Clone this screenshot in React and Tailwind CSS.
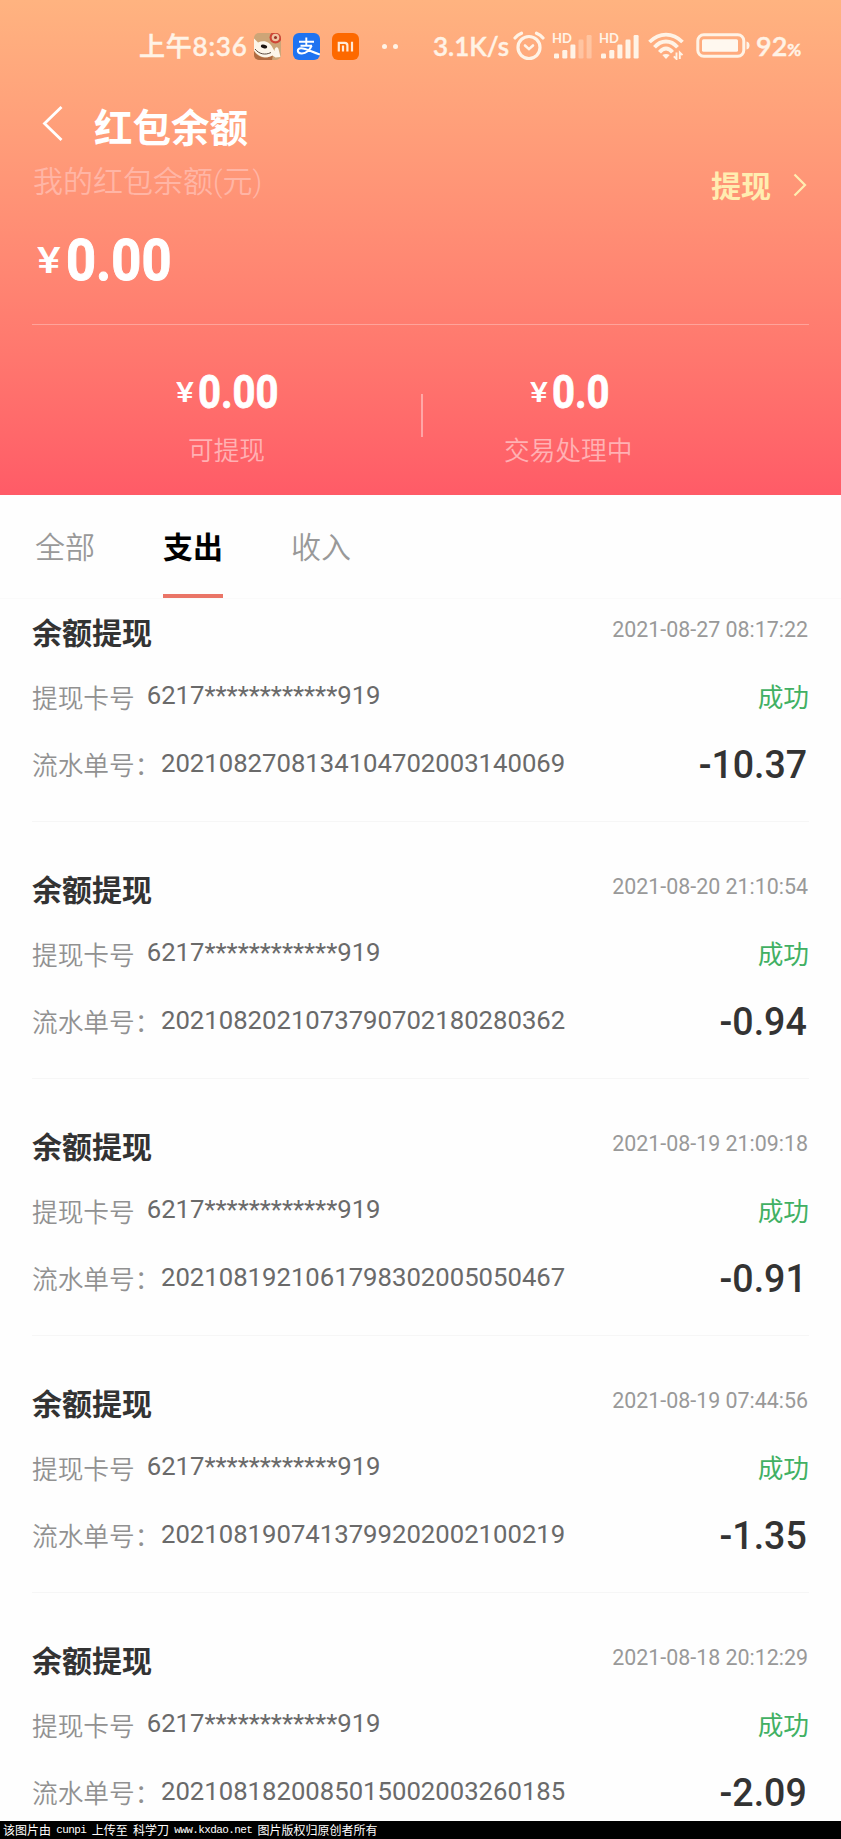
const CJK = "font-['Roboto','Noto_Sans_CJK_SC',sans-serif]"

const RECORDS = [
  { time: '2021-08-27 08:17:22', serial: '2021082708134104702003140069', amount: '-10.37' },
  { time: '2021-08-20 21:10:54', serial: '2021082021073790702180280362', amount: '-0.94' },
  { time: '2021-08-19 21:09:18', serial: '2021081921061798302005050467', amount: '-0.91' },
  { time: '2021-08-19 07:44:56', serial: '2021081907413799202002100219', amount: '-1.35' },
  { time: '2021-08-18 20:12:29', serial: '2021081820085015002003260185', amount: '-2.09' },
]

function JdIcon() {
  return (
    <svg width="27" height="27" viewBox="0 0 27 27" className="shrink-0">
      <defs>
        <clipPath id="jd"><rect width="27" height="27" rx="5" /></clipPath>
      </defs>
      <g clipPath="url(#jd)">
        <rect width="27" height="27" fill="#cda577" />
        <circle cx="21.500" cy="4.500" r="6" fill="#cf4636" />
        <circle cx="21.500" cy="4.500" r="3.800" fill="#efc4a2" />
        <circle cx="21.500" cy="4.500" r="1.500" fill="#9a3226" />
        <path d="M0 18c3 5 9 8 15 6l4-2-1 5H0z" fill="#b06a40" />
        <path d="M0 5.500l4 4c6-2.500 12-1 15 6l1.500 2.500c0-4 3-5 4-2l2 8-5 .5-3-2c-5 3-13 3-18.500-5z" fill="#fdf6ea" />
        <ellipse cx="10" cy="13.500" rx="3.200" ry="1.900" fill="#1c1512" transform="rotate(12 10 13.500)" />
        <path d="M1 16c4 5 10 6.500 16 3.500" fill="none" stroke="#4a382b" strokeWidth="0.900" />
      </g>
    </svg>
  )
}

function AlipayIcon() {
  return (
    <svg width="27" height="27" viewBox="0 0 27 27" className="shrink-0">
      <defs>
        <clipPath id="ali"><rect width="27" height="27" rx="6" /></clipPath>
      </defs>
      <g clipPath="url(#ali)" fill="none" stroke="#fff">
        <rect width="27" height="27" fill="#1f73f1" stroke="none" />
        <path d="M6 8.700h15M13.300 4.500v8.200M7.500 12.700h11.500" strokeWidth="1.900" />
        <path d="M18.600 12.700C17 17 13 20.700 8.600 20.500c-5-.2-4.800-5.200-.6-5.200 5 0 10 3.300 19 6.200" strokeWidth="2.100" />
      </g>
    </svg>
  )
}

function MiIcon() {
  return (
    <svg width="27" height="27" viewBox="0 0 27 27" className="shrink-0">
      <rect width="27" height="27" rx="6" fill="#fd6900" />
      <path d="M6.800 18.500V9.800h6q2.600 0 2.600 2.600v6.100M11 12.500v6M20 8.700v9.800" fill="none" stroke="#ffe9d6" strokeWidth="2.200" />
    </svg>
  )
}

function AlarmIcon() {
  return (
    <svg width="32" height="30" viewBox="0 0 32 30" fill="none" stroke="#fff3e6" strokeWidth="3.200" className="shrink-0">
      <circle cx="16" cy="16.500" r="11" />
      <path d="M2 7Q4.500 3.800 8.500 2.200M30 7Q27.500 3.800 23.500 2.200" strokeLinecap="round" />
      <path d="M12 14.500l4 3.600 4-3.600" strokeWidth="2.600" strokeLinecap="round" />
    </svg>
  )
}

function SignalIcon({ level }) {
  const bars = [
    [2, 20.500, 5],
    [10.300, 17, 8.500],
    [18.400, 11.500, 14],
    [26.500, 6.500, 19],
    [34.600, 2, 23.500],
  ]
  return (
    <span className="relative block h-[27px] w-[40px] shrink-0">
      <span className="absolute -top-[2px] left-0 font-['Lato'] text-[13px] leading-[14px] font-bold text-[#fff3e6]">HD</span>
      <svg width="40" height="27" viewBox="0 0 40 27">
        {bars.map(([x, y, h], i) => (
          <rect key={x} x={x} y={y} width="5" height={h} rx="1.200" fill="#fff3e6" opacity={i < level ? 1 : 0.35} />
        ))}
      </svg>
    </span>
  )
}

function WifiIcon() {
  return (
    <svg width="36" height="28" viewBox="0 0 36 28" fill="none" stroke="#fff3e6" strokeWidth="3.800" className="shrink-0">
      <path d="M1.500 10Q9 2.600 18 2.600T34.500 10" />
      <path d="M6.500 15.300Q11.500 9.500 18 9.500T29.500 15.300" />
      <path d="M11.500 20.300Q14.500 16.500 18 16.500T24.500 20.300" />
      <path d="M14.300 23q3.700-2.200 7.400 0L18 27z" fill="#fff3e6" stroke="none" />
      <path d="M28.500 20.500v6.500l-2.700-2.700M31.800 27v-6.500l2.700 2.700" strokeWidth="1.900" />
    </svg>
  )
}

function BatteryIcon() {
  return (
    <svg width="54" height="26" viewBox="0 0 54 26" className="shrink-0">
      <rect x="1.800" y="1.800" width="46" height="21.500" rx="6" fill="none" stroke="#fff3e6" strokeWidth="3" />
      <rect x="6" y="6.300" width="36" height="12.500" rx="1.500" fill="#fff8ef" />
      <path d="M50.500 8.500q3 .5 3 4t-3 4z" fill="#fff3e6" />
    </svg>
  )
}

function StatusBar() {
  return (
    <div className="flex h-[92px] items-center pl-[139px] font-['Lato','Noto_Sans_CJK_SC',sans-serif] text-[#fff3e6]">
      <span className="w-[115px] text-[26px] font-medium tracking-[0.8px] whitespace-nowrap [-webkit-text-stroke:0.5px]">上午8:36</span>
      <div className="flex gap-[12px]">
        <JdIcon />
        <AlipayIcon />
        <MiIcon />
      </div>
      <div className="ml-[23px] flex gap-[6px]">
        <i className="size-[5px] rounded-full bg-[#fff3e6]" />
        <i className="size-[5px] rounded-full bg-[#fff3e6]" />
      </div>
      <span className="ml-[35px] w-[80px] text-[26px] font-semibold whitespace-nowrap [-webkit-text-stroke:0.4px]">3.1K/s</span>
      <AlarmIcon />
      <div className="ml-[7px] flex gap-[7px]">
        <SignalIcon level={3} />
        <SignalIcon level={5} />
      </div>
      <div className="ml-[9px]"><WifiIcon /></div>
      <div className="ml-[12px]"><BatteryIcon /></div>
      <span className="ml-[6px] text-[27px] font-semibold whitespace-nowrap [-webkit-text-stroke:0.4px]">
        92<span className="text-[17px] font-bold">%</span>
      </span>
    </div>
  )
}

function SmallAmount({ value }) {
  return (
    <div className="flex h-[62px] items-center">
      <span className="w-[22px] origin-left scale-x-[1.2] pt-px text-[28px] font-medium">¥</span>
      <span className="origin-left scale-x-[0.87] text-[46px] font-bold [-webkit-text-stroke:0.8px]">{value}</span>
    </div>
  )
}

function Header() {
  return (
    <header className="h-[495px] shrink-0 bg-linear-to-b from-[#ffb380] to-[#ff5b67] text-white">
      <StatusBar />
      <div className="flex h-[68px] items-center pl-[41px]">
        <svg width="22" height="36" viewBox="0 0 22 36" fill="none" stroke="#fff" strokeWidth="2.800" className="mb-[4px]">
          <path d="M20.500 1L3.500 17.500l17 16.500" />
        </svg>
        <h1 className="ml-[31px] pt-[5px] text-[38.500px] leading-[64px] font-bold">红包余额</h1>
      </div>
      <div className="flex h-[50px] items-start justify-between pr-[34px] pl-[33px]">
        <span className="text-[30px] leading-[43px] font-[350] text-[#ffb5a5]">我的红包余额(元)</span>
        <button className="flex items-center text-[30px] leading-[50px] font-bold text-[#ffedb0]">
          <span className="pt-[2px]">提现</span>
          <svg width="14" height="24" viewBox="0 0 14 24" fill="none" stroke="#ffedb0" strokeWidth="2.200" className="mb-[2px] ml-[22px]">
            <path d="M1.500 1.500L12 12 1.500 22.500" />
          </svg>
        </button>
      </div>
      <div className="flex h-[114px] items-center pb-[13px] pl-[37px]">
        <span className="w-[29px] origin-left scale-x-[1.2] text-[37px] leading-none font-medium">¥</span>
        <span className="origin-left scale-x-[0.92] text-[57px] leading-none font-bold [-webkit-text-stroke:1px]">0.00</span>
      </div>
      <div className="mx-[32px] h-px bg-white/30" />
      <div className="flex pt-[36px]">
        <div className="w-[421px] pl-[176px]">
          <SmallAmount value="0.00" />
          <div className="pl-[12px] text-[25.700px] leading-[56px] font-[350] text-white/50">可提现</div>
        </div>
        <div className="mt-[33px] h-[43px] w-[2px] bg-white/40" />
        <div className="pl-[107px]">
          <SmallAmount value="0.0" />
          <div className="-ml-[26px] text-[25.700px] leading-[56px] font-[350] text-white/50">交易处理中</div>
        </div>
      </div>
    </header>
  )
}

function Tabs() {
  return (
    <nav className="flex h-[104px] shrink-0 gap-[68px] border-b border-[#fafafa] pl-[35px] text-[30px] leading-[105px] font-[350] text-[#999]">
      <span>全部</span>
      <span className="relative font-bold text-black">
        支出
        <i className="absolute top-[99px] left-0 h-[4px] w-full bg-[#ea7567]" />
      </span>
      <span>收入</span>
    </nav>
  )
}

function RecordItem({ record }) {
  return (
    <li className="mx-[32px] border-b border-[#f6f6f6] pt-[34px] pb-[22px] first:pt-0">
      <div className="flex h-[66px] items-center justify-between">
        <h2 className="pt-[2px] text-[30px] font-bold text-[#333]">余额提现</h2>
        <time className="pr-px pb-[3px] text-[21.400px] text-[#999]">{record.time}</time>
      </div>
      <div className="flex h-[66px] items-center justify-between text-[25.700px]">
        <div className="flex items-center">
          <span className="pt-[2px] font-[350] text-[#919191]">提现卡号</span>
          <span className="ml-[12px] pb-[5px] text-[#6a6a6a]">6217************919</span>
        </div>
        <span className="text-[#41b063]">成功</span>
      </div>
      <div className="flex h-[68px] items-center justify-between text-[25.700px]">
        <div className="flex items-center">
          <span className="w-[129px] pt-[3px] font-[350] whitespace-nowrap text-[#919191]">流水单号：</span>
          <span className="pb-[4px] text-[#6a6a6a]">{record.serial}</span>
        </div>
        <span className="mr-[2px] origin-right scale-x-[0.95] text-[39.500px] font-medium text-[#333]">{record.amount}</span>
      </div>
    </li>
  )
}

function Latin({ children }) {
  return <span className="font-['Liberation_Mono',monospace] text-[11px] tracking-[-0.600px]">{children}</span>
}

export default function App() {
  return (
    <div lang="zh-CN" className={`flex h-[1839px] w-[841px] flex-col overflow-hidden bg-[#fefefe] ${CJK}`}>
      <Header />
      <Tabs />
      <ul className="min-h-0 flex-1">
        {RECORDS.map((r) => <RecordItem key={r.serial} record={r} />)}
      </ul>
      <footer className="relative flex h-[18px] shrink-0 gap-[5.300px] bg-black pl-[3px] font-['Noto_Sans_CJK_SC',sans-serif] text-[12px] leading-[18px] whitespace-nowrap text-white">
        <span>该图片由</span>
        <Latin>cunpi</Latin>
        <span>上传至</span>
        <span>科学刀</span>
        <Latin>www.kxdao.net</Latin>
        <span>图片版权归原创者所有</span>
      </footer>
    </div>
  )
}
